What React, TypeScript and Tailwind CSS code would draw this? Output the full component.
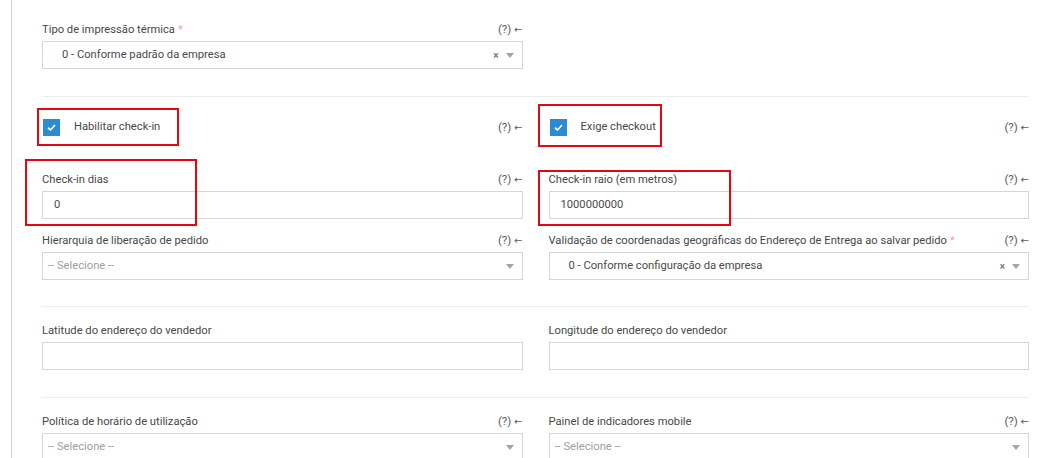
import type { ReactNode } from 'react'

// seta "(?) ←" de ajuda ao lado de cada campo
function Help() {
  return (
    <span className="whitespace-nowrap text-[11.5px] text-[#5a5a5a]">
      (?) <span className="font-['DejaVu_Sans',sans-serif] text-[10px]">←</span>
    </span>
  )
}

function FieldLabel({ label, required, help = true }: { label: string; required?: boolean; help?: boolean }) {
  return (
    <div className="mb-[4px] flex h-[17px] items-center justify-between pt-[2px] leading-4">
      <span className="text-[#484848]">
        {label}
        {required && <span className="ml-[3px] text-[#f5a3a3]">*</span>}
      </span>
      {help && <Help />}
    </div>
  )
}

function Caret() {
  return <span className="h-0 w-0 border-x-[4px] border-t-[5px] border-b-0 border-x-transparent border-t-[#a5a5a5]" />
}

function Select({ value, clearable }: { value?: string; clearable?: boolean }) {
  return (
    <div
      className={`flex h-[28px] items-center border border-[#d6d6d6] bg-white pr-[8px] ${value ? 'pl-[19px]' : 'pl-[5px]'}`}
    >
      <span className={`flex-1 ${value ? 'text-[#4a4a4a]' : 'text-[#a0a0a0]'}`}>{value ?? '-- Selecione --'}</span>
      {clearable && <span className="mr-[7px] text-[10px] font-bold text-[#777]">×</span>}
      <Caret />
    </div>
  )
}

function Input({ value }: { value?: string }) {
  return (
    <div className="flex h-[28px] items-center border border-[#d6d6d6] bg-white pl-[11px] text-[#4a4a4a]">{value}</div>
  )
}

function Checkbox({ label }: { label: string }) {
  return (
    <div className="flex h-4 items-center justify-between">
      <div className="flex items-center gap-[14px] pl-px">
        <span className="flex h-[17px] w-[17px] items-center justify-center bg-[#2b8bd3]">
          <svg width="9" height="7" viewBox="0 0 9 7" fill="none">
            <path d="M1 3.6 3.4 6 8 1" stroke="white" strokeWidth="1.6" />
          </svg>
        </span>
        <span className="pt-px text-[#484848]">{label}</span>
      </div>
      <span className="pt-px">
        <Help />
      </span>
    </div>
  )
}

function Row({ children, className = '' }: { children: ReactNode; className?: string }) {
  return <div className={`grid grid-cols-2 gap-x-[26px] ${className}`}>{children}</div>
}

function Divider({ className = '' }: { className?: string }) {
  return <div className={`border-t border-[#eeeeee] ${className}`} />
}

export default function App() {
  return (
    <div className="relative h-[458px] w-[1053px] overflow-hidden bg-white font-[Roboto,'Liberation_Sans',Arial,sans-serif] text-[11.2px]">
      <div className="ml-[11px] h-full border-l border-[#d2d2d2] pl-[30px] pr-[24px]">
        <Row className="pt-[20px]">
          <div>
            <FieldLabel label="Tipo de impressão térmica" required />
            <Select value="0 - Conforme padrão da empresa" clearable />
          </div>
          <div />
        </Row>

        <Divider className="mt-[27px]" />

        <Row className="mt-[22px]">
          <Checkbox label="Habilitar check-in" />
          <Checkbox label="Exige checkout" />
        </Row>

        <Row className="mt-[35px]">
          <div>
            <FieldLabel label="Check-in dias" />
            <Input value="0" />
          </div>
          <div>
            <FieldLabel label="Check-in raio (em metros)" />
            <Input value="1000000000" />
          </div>
        </Row>

        <Row className="mt-[12px]">
          <div>
            <FieldLabel label="Hierarquia de liberação de pedido" />
            <Select />
          </div>
          <div>
            <FieldLabel label="Validação de coordenadas geográficas do Endereço de Entrega ao salvar pedido" required />
            <Select value="0 - Conforme configuração da empresa" clearable />
          </div>
        </Row>

        <Divider className="mt-[26px]" />

        <Row className="mt-[14px]">
          <div>
            <FieldLabel label="Latitude do endereço do vendedor" help={false} />
            <Input />
          </div>
          <div>
            <FieldLabel label="Longitude do endereço do vendedor" help={false} />
            <Input />
          </div>
        </Row>

        <Divider className="mt-[27px]" />

        <Row className="mt-[14px]">
          <div>
            <FieldLabel label="Política de horário de utilização" />
            <Select />
          </div>
          <div>
            <FieldLabel label="Painel de indicadores mobile" />
            <Select />
          </div>
        </Row>
      </div>

      {/* marcações em vermelho sobre os campos de check-in */}
      <div className="absolute left-[37px] top-[108px] h-[38px] w-[142px] border-2 border-[#e30613]" />
      <div className="absolute left-[25px] top-[159px] h-[67px] w-[172px] border-2 border-[#e30613]" />
      <div className="absolute left-[538px] top-[104px] h-[43px] w-[124px] border-2 border-[#e30613]" />
      <div className="absolute left-[538px] top-[170px] h-[56px] w-[193px] border-2 border-[#e30613]" />
    </div>
  )
}
